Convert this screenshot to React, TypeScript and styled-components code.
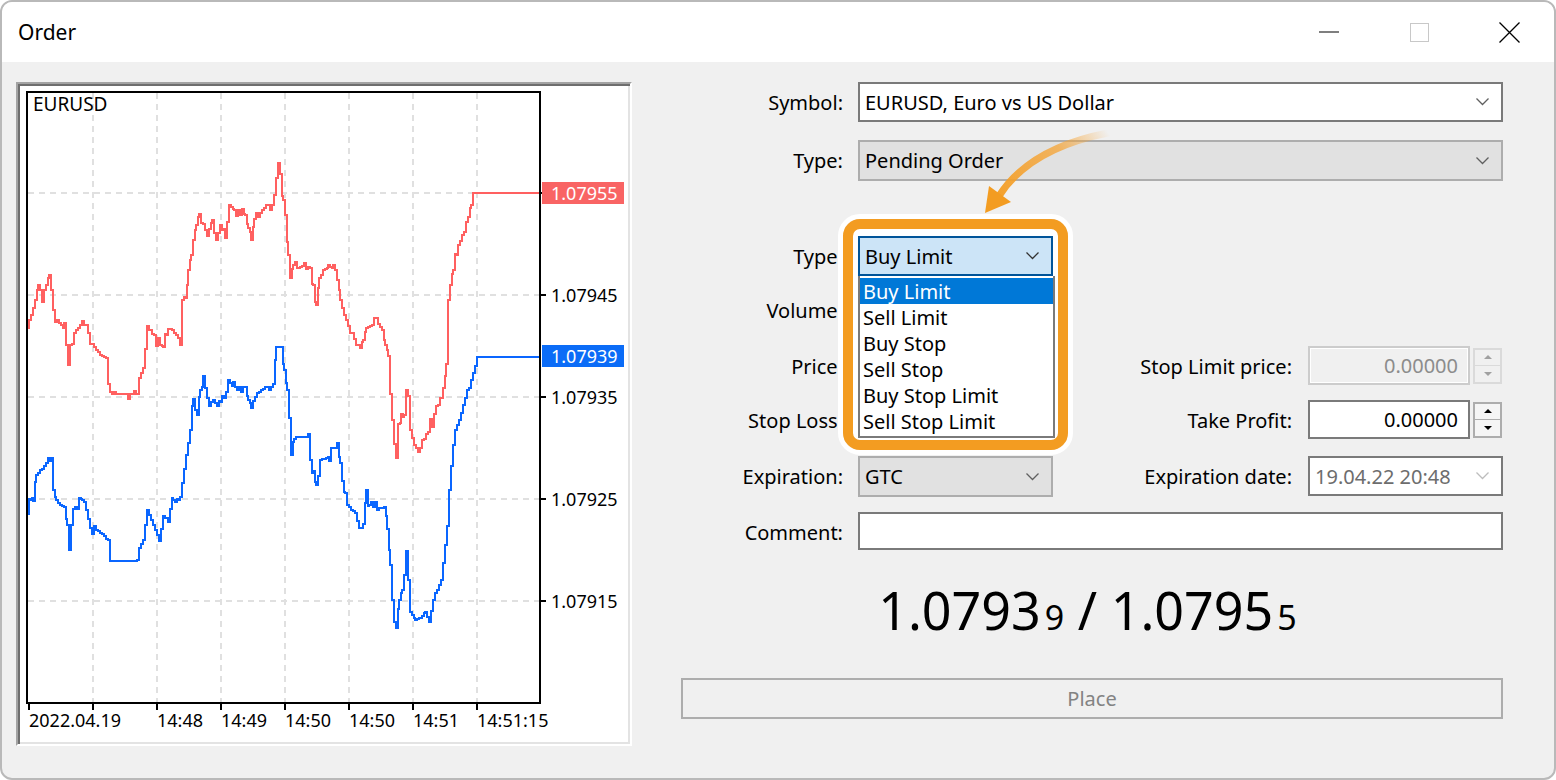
import React from "react";
import styled, { createGlobalStyle } from "styled-components";

const GlobalStyle = createGlobalStyle`
  html, body {
    margin: 0;
    padding: 0;
    background: #ffffff;
  }
  body {
    font-family: "Noto Sans", "Open Sans", sans-serif;
    color: #000;
  }
  * { box-sizing: border-box; }
`;

// ---- chart data (page coordinates) ----
const BLUE: [number, number][] = [
  [27, 508], [30, 500], [33, 497], [36, 475], [40, 470], [44, 468], [48, 458], [51, 458], [53, 490],
  [56, 500], [60, 505], [64, 507], [67, 525], [69, 550], [71, 520], [75, 508], [79, 498], [82, 500],
  [86, 510], [90, 528], [96, 528], [100, 533], [104, 538], [108, 540], [110, 561], [135, 561],
  [139, 548], [143, 540], [147, 510], [151, 520], [155, 530], [159, 540], [163, 518], [168, 518],
  [173, 500], [178, 500], [182, 483], [186, 455], [190, 430], [193, 405], [197, 412], [200, 390],
  [203, 378], [207, 398], [211, 402], [215, 397], [220, 402], [224, 397], [228, 380], [233, 387],
  [245, 387], [248, 400], [251, 405], [255, 397], [261, 390], [265, 387], [273, 387], [276, 347],
  [281, 347], [284, 370], [287, 390], [289, 418], [291, 455], [294, 437], [308, 437], [310, 460],
  [313, 475], [316, 485], [320, 460], [329, 457], [331, 448], [337, 448], [340, 470], [345, 498],
  [349, 508], [355, 513], [359, 528], [363, 528], [366, 490], [369, 505], [375, 508], [384, 508],
  [387, 530], [390, 565], [392, 600], [394, 622], [396, 628], [399, 600], [402, 590], [404, 575],
  [406, 552], [408, 580], [410, 612], [415, 620], [420, 618], [425, 612], [429, 622], [433, 600],
  [437, 590], [441, 580], [445, 545], [447, 530], [449, 490], [451, 460], [455, 430], [459, 420],
  [463, 405], [467, 390], [471, 380], [475, 365], [477, 357], [539, 357],
];

const RED: [number, number][] = [
  [27, 325], [31, 315], [35, 300], [38, 285], [42, 295], [46, 285], [49, 275], [51, 290], [53, 310],
  [57, 320], [61, 325], [64, 330], [66, 345], [68, 365], [70, 345], [74, 333], [80, 325], [86, 325],
  [90, 340], [94, 347], [100, 355], [106, 358], [108, 390], [112, 394], [120, 394], [130, 394],
  [137, 394], [139, 378], [143, 368], [147, 330], [152, 330], [156, 340], [160, 345], [163, 347],
  [166, 328], [172, 330], [178, 338], [180, 345], [182, 300], [185, 295], [188, 270], [191, 255],
  [193, 240], [196, 225], [199, 213], [203, 220], [207, 235], [212, 225], [216, 240], [220, 225],
  [225, 238], [229, 205], [234, 210], [240, 210], [245, 215], [248, 228], [251, 240], [254, 220],
  [258, 215], [262, 210], [266, 205], [270, 210], [274, 200], [276, 178], [278, 163], [280, 170],
  [283, 200], [285, 215], [288, 255], [290, 278], [293, 265], [298, 268], [304, 265], [310, 268],
  [313, 285], [316, 305], [319, 280], [323, 270], [328, 268], [333, 265], [337, 275], [340, 300],
  [344, 315], [348, 325], [352, 333], [356, 345], [360, 345], [363, 340], [366, 328], [372, 325],
  [378, 325], [382, 330], [385, 345], [388, 352], [390, 400], [392, 420], [394, 440], [396, 458],
  [398, 430], [401, 420], [404, 415], [406, 390], [408, 400], [410, 430], [414, 445], [418, 452],
  [422, 440], [426, 430], [430, 425], [434, 420], [438, 405], [441, 395], [443, 388], [446, 370],
  [448, 300], [450, 285], [453, 268], [456, 255], [460, 240], [464, 228], [468, 215], [471, 205],
  [473, 193], [539, 193],
];

const H_GRID = [193, 295, 397, 499, 601];
const V_GRID = [93, 157, 221, 285, 349, 413, 477];
const PRICE_LABELS: [number, string][] = [
  [295, "1.07945"], [397, "1.07935"], [499, "1.07925"], [601, "1.07915"],
];
const TIME_LABELS: [number, string][] = [
  [29, "2022.04.19"], [157, "14:48"], [221, "14:49"], [285, "14:50"],
  [349, "14:50"], [413, "14:51"], [477, "14:51:15"],
];

function rng(seed: number) {
  let s = seed;
  return () => {
    s = (s * 16807) % 2147483647;
    return s / 2147483647;
  };
}

function stepPath(keys: [number, number][], seed: number) {
  const r = rng(seed);
  const pts: [number, number][] = [];
  for (let i = 0; i < keys.length - 1; i++) {
    const [x0, y0] = keys[i];
    const [x1, y1] = keys[i + 1];
    if (y0 === y1 && x1 - x0 >= 20) {
      pts.push([x0, y0]);
      continue;
    }
    for (let x = x0; x < x1; x += 2) {
      const t = (x - x0) / (x1 - x0);
      let y = y0 + (y1 - y0) * t;
      if (r() < 0.35) y += (r() - 0.5) * 14;
      pts.push([x, Math.round(y)]);
    }
  }
  pts.push(keys[keys.length - 1]);
  let d = `M${pts[0][0]} ${pts[0][1]}`;
  for (let i = 1; i < pts.length; i++) d += ` H${pts[i][0]} V${pts[i][1]}`;
  return d;
}

// ---- window chrome ----
const Window = styled.div`
  width: 1556px;
  height: 780px;
  border: 2px solid #b9b9b9;
  border-radius: 12px;
  overflow: hidden;
  background: #f0f0f0;
  display: flex;
  flex-direction: column;
`;

const TitleBar = styled.div`
  height: 60px;
  background: #ffffff;
  display: flex;
  align-items: center;
  padding-left: 16px;
`;

const Title = styled.div`
  flex: 1;
  font-size: 21px;
  color: #000;
`;

const CaptionButton = styled.div`
  width: 90px;
  height: 60px;
  display: flex;
  align-items: center;
  justify-content: center;
`;

const Body = styled.div`
  flex: 1;
  display: flex;
  align-items: flex-start;
  padding: 20px 0 0 14px;
`;

// ---- chart ----
const ChartPanel = styled.div`
  width: 616px;
  height: 664px;
  padding: 2px;
  background: #ffffff;
  border: 2px solid;
  border-color: #a3a3a3 #ffffff #ffffff #a3a3a3;
  box-shadow: inset 2px 2px 0 #6e6e6e, inset -2px -2px 0 #e3e3e3;
  svg { display: block; }
`;

const AxisText = styled.text`
  font-family: "Noto Sans", "Open Sans", sans-serif;
  font-size: 18px;
`;

const Chart: React.FC = () => {
  const blue = React.useMemo(() => stepPath(BLUE, 7), []);
  const red = React.useMemo(() => stepPath(RED, 13), []);
  return (
    <svg width="608" height="656" viewBox="20 86 608 656">
      {H_GRID.map((y) => (
        <line key={"h" + y} x1="28" x2="539" y1={y} y2={y} stroke="#e0e0e0" strokeWidth="2" strokeDasharray="6 5" />
      ))}
      {V_GRID.map((x) => (
        <line key={"v" + x} x1={x} x2={x} y1="93" y2="702" stroke="#e0e0e0" strokeWidth="2" strokeDasharray="6 5" />
      ))}
      <path d={red} fill="none" stroke="#ff6060" strokeWidth="2" shapeRendering="crispEdges" />
      <path d={blue} fill="none" stroke="#0a66ff" strokeWidth="2" shapeRendering="crispEdges" />
      <rect x="27" y="92" width="513" height="611" fill="none" stroke="#000" strokeWidth="2" />
      {H_GRID.map((y) => (
        <line key={"t" + y} x1="540" x2="546" y1={y} y2={y} stroke="#000" strokeWidth="2" />
      ))}
      {[29, ...V_GRID].map((x) => (
        <line key={"b" + x} x1={x} x2={x} y1="703" y2="710" stroke="#000" strokeWidth="2" />
      ))}
      <AxisText x="33" y="111" style={{ fontSize: 19 }}>EURUSD</AxisText>
      {PRICE_LABELS.map(([y, t]) => (
        <AxisText key={t} x="551" y={y + 7}>{t}</AxisText>
      ))}
      {TIME_LABELS.map(([x, t]) => (
        <AxisText key={x} x={x} y="727">{t}</AxisText>
      ))}
      <rect x="542" y="182" width="82" height="22" fill="#f96464" />
      <AxisText x="551" y="200" fill="#ffffff">1.07955</AxisText>
      <rect x="542" y="345" width="82" height="22" fill="#0b6cf7" />
      <AxisText x="551" y="363" fill="#ffffff">1.07939</AxisText>
    </svg>
  );
};

// ---- form ----
const FormColumn = styled.div`
  width: 823px;
  margin-left: 48px;
  display: flex;
  flex-direction: column;
`;

const FormGrid = styled.div`
  display: grid;
  grid-template-columns: 178px 195px 255px 195px;
  grid-template-rows: 58px 96px 54px 56px 54px 56px 56px 40px;
  align-items: start;
`;

const Label = styled.div<{ $row: number; $col: number; $gap: number }>`
  grid-row: ${(p) => p.$row};
  grid-column: ${(p) => p.$col};
  height: 40px;
  display: flex;
  align-items: center;
  justify-content: flex-end;
  padding-right: ${(p) => p.$gap}px;
  font-size: 20px;
  white-space: nowrap;
`;

const Cell = styled.div<{ $row: number; $col: string }>`
  grid-row: ${(p) => p.$row};
  grid-column: ${(p) => p.$col};
  position: relative;
`;

type Variant = "white" | "gray" | "focus" | "dim";

const BOX_BG: Record<Variant, string> = {
  white: "#ffffff",
  gray: "#e1e1e1",
  focus: "#cce4f7",
  dim: "#ffffff",
};
const BOX_BORDER: Record<Variant, string> = {
  white: "#7a7a7a",
  gray: "#adadad",
  focus: "#005499",
  dim: "#7a7a7a",
};

const Box = styled.div<{ $variant: Variant; $h?: number }>`
  position: relative;
  z-index: 2;
  height: ${(p) => p.$h ?? 40}px;
  display: flex;
  align-items: center;
  padding: 0 12px 0 5px;
  background: ${(p) => BOX_BG[p.$variant]};
  border: 2px solid ${(p) => BOX_BORDER[p.$variant]};
  font-size: 20px;
  color: ${(p) => (p.$variant === "dim" ? "#6d6d6d" : "#000")};
`;

const BoxText = styled.span`
  flex: 1;
  white-space: nowrap;
`;

const Chevron: React.FC<{ color: string }> = ({ color }) => (
  <svg width="13" height="8" viewBox="0 0 13 8">
    <path d="M0.5 0.5 L6.5 6.5 L12.5 0.5" fill="none" stroke={color} strokeWidth="1.3" />
  </svg>
);

const SpinRow = styled.div`
  display: flex;
  align-items: center;
  gap: 3px;
`;

const ValueBox = styled.div<{ $disabled?: boolean }>`
  width: 162px;
  height: 39px;
  display: flex;
  align-items: center;
  justify-content: flex-end;
  padding-right: 10px;
  font-size: 20px;
  background: ${(p) => (p.$disabled ? "#f0f0f0" : "#ffffff")};
  border: 2px solid ${(p) => (p.$disabled ? "#cccccc" : "#7a7a7a")};
  box-shadow: ${(p) => (p.$disabled ? "inset 0 0 0 1px #ffffff" : "none")};
  color: ${(p) => (p.$disabled ? "#8c8c8c" : "#000")};
`;

const Spinner = styled.div<{ $disabled?: boolean }>`
  width: 29px;
  height: 36px;
  display: flex;
  flex-direction: column;
  border: 2px solid ${(p) => (p.$disabled ? "#dadada" : "#adadad")};
  background: ${(p) => (p.$disabled ? "#f0f0f0" : "#f5f5f5")};
`;

const SpinHalf = styled.div<{ $dir: "up" | "down"; $disabled?: boolean }>`
  flex: 1;
  display: flex;
  align-items: center;
  justify-content: center;
  border-top: ${(p) => (p.$dir === "down" ? `1px solid ${p.$disabled ? "#dadada" : "#adadad"}` : "none")};
  &::after {
    content: "";
    border-left: 4px solid transparent;
    border-right: 4px solid transparent;
    ${(p) => (p.$dir === "up" ? "border-bottom" : "border-top")}: 4px solid ${(p) => (p.$disabled ? "#a0a0a0" : "#000")};
  }
`;

const SpinField: React.FC<{ value: string; disabled?: boolean }> = ({ value, disabled }) => (
  <SpinRow>
    <ValueBox $disabled={disabled}>{value}</ValueBox>
    <Spinner $disabled={disabled}>
      <SpinHalf $dir="up" $disabled={disabled} />
      <SpinHalf $dir="down" $disabled={disabled} />
    </Spinner>
  </SpinRow>
);

// dropdown overlay + annotation
const DropList = styled.div`
  position: absolute;
  z-index: 3;
  left: 0;
  top: 40px;
  width: 197px;
  padding: 2px 0;
  background: #ffffff;
  border: 2px solid #7a7a7a;
  border-top: none;
`;

const ListItem = styled.div<{ $active?: boolean }>`
  height: 26px;
  display: flex;
  align-items: center;
  padding-left: 3px;
  font-size: 20px;
  white-space: nowrap;
  background: ${(p) => (p.$active ? "#0078d7" : "transparent")};
  color: ${(p) => (p.$active ? "#ffffff" : "#000")};
`;

const Halo = styled.div`
  position: absolute;
  z-index: 1;
  left: -20px;
  top: -22px;
  width: 235px;
  height: 241px;
  border: 5px solid #ffffff;
  border-radius: 22px;
`;

const Ring = styled.div`
  width: 100%;
  height: 100%;
  border: 10px solid #f39c21;
  border-radius: 17px;
  background: #ffffff;
`;

const ArrowMark = styled.svg`
  position: absolute;
  z-index: 4;
  left: 117px;
  top: -108px;
`;

const Quote = styled.div`
  margin-top: 32px;
  padding-right: 8px;
  display: flex;
  justify-content: center;
  align-items: baseline;
  font-size: 52px;
  line-height: 52px;
  letter-spacing: 0;
  white-space: pre;
`;

const QuoteSmall = styled.span`
  font-size: 34px;
  margin-left: 4px;
`;

const PlaceButton = styled.div`
  margin: 35px 0 0 1px;
  width: 822px;
  height: 41px;
  display: flex;
  align-items: center;
  justify-content: center;
  border: 2px solid #adadad;
  background: #f0f0f0;
  color: #838383;
  font-size: 20px;
`;

const ORDER_TYPES = ["Buy Limit", "Sell Limit", "Buy Stop", "Sell Stop", "Buy Stop Limit", "Sell Stop Limit"];

const App: React.FC = () => (
  <>
    <GlobalStyle />
    <Window>
      <TitleBar>
        <Title>Order</Title>
        <CaptionButton>
          <svg width="20" height="2" viewBox="0 0 20 2"><line x1="0" x2="20" y1="1" y2="1" stroke="#000" strokeWidth="1.2" /></svg>
        </CaptionButton>
        <CaptionButton>
          <svg width="19" height="19" viewBox="0 0 19 19"><rect x="0.5" y="0.5" width="18" height="18" fill="none" stroke="#c8c8c8" strokeWidth="1" /></svg>
        </CaptionButton>
        <CaptionButton>
          <svg width="21" height="21" viewBox="0 0 21 21"><path d="M0.5 0.5 L20.5 20.5 M20.5 0.5 L0.5 20.5" stroke="#000" strokeWidth="1.3" /></svg>
        </CaptionButton>
      </TitleBar>
      <Body>
        <ChartPanel>
          <Chart />
        </ChartPanel>
        <FormColumn>
          <FormGrid>
            <Label $row={1} $col={1} $gap={15}>Symbol:</Label>
            <Cell $row={1} $col="2 / 5">
              <Box $variant="white"><BoxText>EURUSD, Euro vs US Dollar</BoxText><Chevron color="#606060" /></Box>
            </Cell>

            <Label $row={2} $col={1} $gap={15}>Type:</Label>
            <Cell $row={2} $col="2 / 5">
              <Box $variant="gray" $h={41}><BoxText>Pending Order</BoxText><Chevron color="#606060" /></Box>
            </Cell>

            <Label $row={3} $col={1} $gap={15}>Type:</Label>
            <Cell $row={3} $col="2">
              <Halo><Ring /></Halo>
              <ArrowMark width="135" height="90" viewBox="975 128 135 90">
                <defs>
                  <linearGradient id="arrowFade" x1="1108" y1="132" x2="990" y2="210" gradientUnits="userSpaceOnUse">
                    <stop offset="0" stopColor="#f6a435" stopOpacity="0" />
                    <stop offset="0.35" stopColor="#f6a435" stopOpacity="0.75" />
                    <stop offset="1" stopColor="#f39c21" stopOpacity="1" />
                  </linearGradient>
                </defs>
                <path d="M999 196 Q1030 148 1108 133" fill="none" stroke="url(#arrowFade)" strokeWidth="7" strokeLinecap="round" />
                <polygon points="985,213 989,186 1011,202" fill="#f39c21" />
              </ArrowMark>
              <Box $variant="focus"><BoxText>Buy Limit</BoxText><Chevron color="#333333" /></Box>
              <DropList>
                {ORDER_TYPES.map((t, i) => (
                  <ListItem key={t} $active={i === 0}>{t}</ListItem>
                ))}
              </DropList>
            </Cell>

            <Label $row={4} $col={1} $gap={15}>Volume:</Label>
            <Label $row={5} $col={1} $gap={15}>Price:</Label>
            <Label $row={5} $col={3} $gap={16}>Stop Limit price:</Label>
            <Cell $row={5} $col="4">
              <SpinField value="0.00000" disabled />
            </Cell>

            <Label $row={6} $col={1} $gap={15}>Stop Loss:</Label>
            <Label $row={6} $col={3} $gap={16}>Take Profit:</Label>
            <Cell $row={6} $col="4">
              <SpinField value="0.00000" />
            </Cell>

            <Label $row={7} $col={1} $gap={15}>Expiration:</Label>
            <Cell $row={7} $col="2">
              <Box $variant="gray" $h={41}><BoxText>GTC</BoxText><Chevron color="#606060" /></Box>
            </Cell>
            <Label $row={7} $col={3} $gap={16}>Expiration date:</Label>
            <Cell $row={7} $col="4">
              <Box $variant="dim"><BoxText>19.04.22 20:48</BoxText><Chevron color="#bdbdbd" /></Box>
            </Cell>

            <Label $row={8} $col={1} $gap={15}>Comment:</Label>
            <Cell $row={8} $col="2 / 5">
              <Box $variant="white" $h={38} />
            </Cell>
          </FormGrid>

          <Quote>
            1.0793<QuoteSmall>9</QuoteSmall>{" / "}1.0795<QuoteSmall>5</QuoteSmall>
          </Quote>
          <PlaceButton>Place</PlaceButton>
        </FormColumn>
      </Body>
    </Window>
  </>
);

export default App;
